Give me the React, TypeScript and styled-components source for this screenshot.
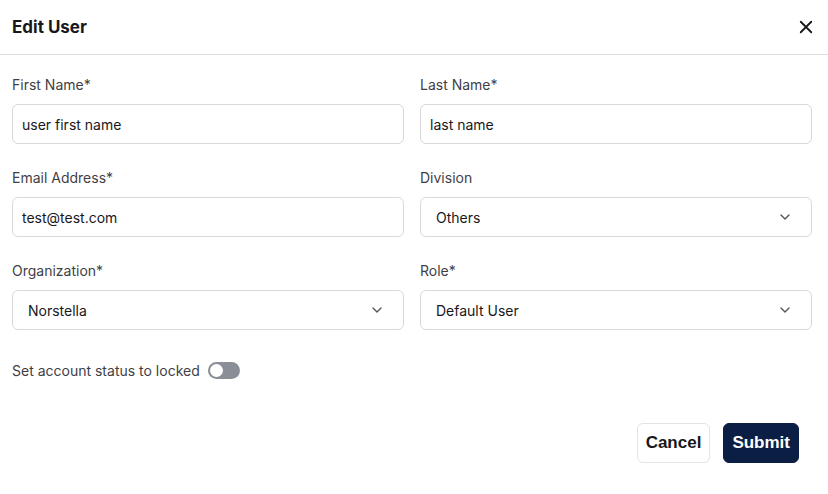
import React, { useState } from 'react';
import styled, { createGlobalStyle } from 'styled-components';

const GlobalStyle = createGlobalStyle`
    html, body {
        margin: 0;
        padding: 0;
        background: #ffffff;
    }
    body {
        font-family: Inter, "Noto Sans", sans-serif;
        color: #18181b;
    }
    * {
        box-sizing: border-box;
    }
`;

const Dialog = styled.div`
    width: 828px;
    height: 494px;
    background: #ffffff;
    display: flex;
    flex-direction: column;
`;

const Header = styled.div`
    height: 55px;
    padding: 0 12px;
    border-bottom: 1px solid #dedede;
    display: flex;
    align-items: center;
    justify-content: space-between;
`;

const Title = styled.h2`
    margin: 0;
    font-size: 17px;
    font-weight: 700;
    color: #18181b;
`;

const CloseButton = styled.button`
    border: none;
    background: none;
    padding: 0;
    width: 20px;
    height: 20px;
    display: flex;
    align-items: center;
    justify-content: center;
    color: #18181b;
    cursor: pointer;
`;

const Body = styled.div`
    padding: 20px 16px 0 12px;
`;

const Grid = styled.div`
    display: grid;
    grid-template-columns: 392px 392px;
    column-gap: 16px;
    row-gap: 24px;
`;

const Field = styled.div`
    display: flex;
    flex-direction: column;
    gap: 9px;
`;

const Label = styled.label`
    font-size: 14px;
    line-height: 20px;
    color: #3f3f46;
`;

const Input = styled.input`
    height: 40px;
    width: 100%;
    border: 1px solid #d9d9dc;
    border-radius: 6px;
    padding: 0 9px;
    font-family: Inter, "Noto Sans", sans-serif;
    font-size: 14px;
    color: #18181b;
    outline: none;
`;

const SelectBox = styled.div`
    height: 40px;
    border: 1px solid #d9d9dc;
    border-radius: 6px;
    padding: 0 18px 0 15px;
    display: flex;
    align-items: center;
    justify-content: space-between;
    font-size: 14px;
    color: #18181b;
    cursor: pointer;
`;

const ToggleRow = styled.div`
    margin-top: 32px;
    display: flex;
    align-items: center;
    gap: 8px;
    font-size: 14px;
    color: #3f3f46;
`;

const Track = styled.button<{ $on: boolean }>`
    width: 32px;
    height: 17px;
    border: none;
    border-radius: 9px;
    padding: 0 2px;
    background: ${(props) => (props.$on ? '#0b1f45' : '#8a8e96')};
    display: flex;
    align-items: center;
    justify-content: ${(props) => (props.$on ? 'flex-end' : 'flex-start')};
    cursor: pointer;
`;

const Knob = styled.span`
    width: 13px;
    height: 13px;
    border-radius: 50%;
    background: #ffffff;
`;

const Footer = styled.div`
    margin-top: 44px;
    margin-right: -16px;
    padding-right: 29px;
    display: flex;
    justify-content: flex-end;
    gap: 13px;
`;

const Button = styled.button<{ $primary?: boolean }>`
    height: 40px;
    padding: 0 8px;
    border-radius: 6px;
    border: 1px solid ${(props) => (props.$primary ? '#0b1f45' : '#e4e4e7')};
    background: ${(props) => (props.$primary ? '#0b1f45' : '#ffffff')};
    color: ${(props) => (props.$primary ? '#ffffff' : '#18181b')};
    font-family: "Liberation Sans", Arial, sans-serif;
    font-size: 17px;
    font-weight: 700;
    cursor: pointer;
`;

const Chevron = () => (
    <svg width="16" height="16" viewBox="0 0 24 24" fill="none" stroke="#52525b" strokeWidth="2" strokeLinecap="round" strokeLinejoin="round">
        <path d="m6 9 6 6 6-6" />
    </svg>
);

interface SelectProps {
    value: string;
}

const Select: React.FC<SelectProps> = ({ value }) => (
    <SelectBox>
        <span>{value}</span>
        <Chevron />
    </SelectBox>
);

const App: React.FC = () => {
    const [locked, setLocked] = useState(false);

    return (
        <>
            <GlobalStyle />
            <Dialog>
                <Header>
                    <Title>Edit User</Title>
                    <CloseButton aria-label="Close">
                        <svg width="18" height="18" viewBox="0 0 24 24" fill="none" stroke="currentColor" strokeWidth="2.4" strokeLinecap="round">
                            <path d="M5 5l14 14M19 5 5 19" />
                        </svg>
                    </CloseButton>
                </Header>
                <Body>
                    <Grid>
                        <Field>
                            <Label>First Name*</Label>
                            <Input defaultValue="user first name" />
                        </Field>
                        <Field>
                            <Label>Last Name*</Label>
                            <Input defaultValue="last name" />
                        </Field>
                        <Field>
                            <Label>Email Address*</Label>
                            <Input defaultValue="test@test.com" />
                        </Field>
                        <Field>
                            <Label>Division</Label>
                            <Select value="Others" />
                        </Field>
                        <Field>
                            <Label>Organization*</Label>
                            <Select value="Norstella" />
                        </Field>
                        <Field>
                            <Label>Role*</Label>
                            <Select value="Default User" />
                        </Field>
                    </Grid>
                    <ToggleRow>
                        <span>Set account status to locked</span>
                        <Track $on={locked} onClick={() => setLocked(!locked)}>
                            <Knob />
                        </Track>
                    </ToggleRow>
                    <Footer>
                        <Button>Cancel</Button>
                        <Button $primary>Submit</Button>
                    </Footer>
                </Body>
            </Dialog>
        </>
    );
};

export default App;
